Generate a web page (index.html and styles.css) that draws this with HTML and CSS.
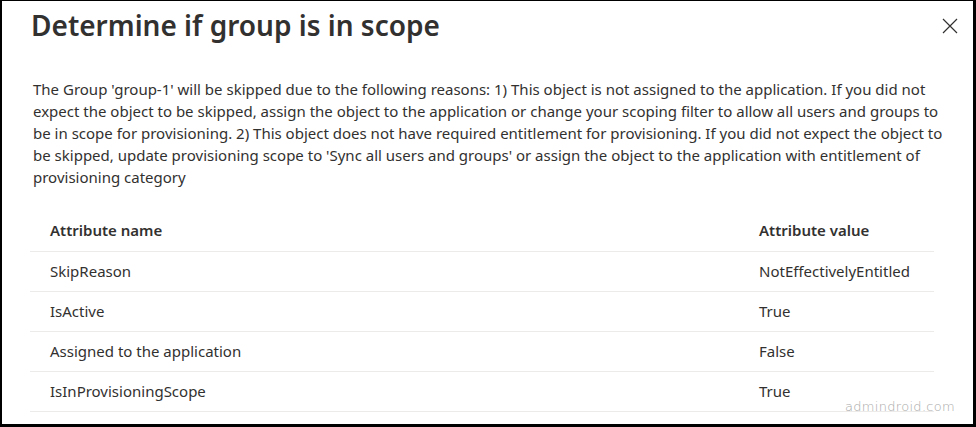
FILE: index.html
```html
<!DOCTYPE html>
<html>
<head>
<meta charset="utf-8">
<link rel="stylesheet" href="styles.css">
</head>
<body>
<div class="frame">
  <div class="header">
    <h1 class="title">Determine if group is in scope</h1>
    <button class="close" aria-label="Close">
      <svg width="16" height="16" viewBox="0 0 16 16"><path d="M1 1 L15 15 M15 1 L1 15" stroke="#323130" stroke-width="1.2" fill="none"/></svg>
    </button>
  </div>
  <p class="desc">The Group 'group-1' will be skipped due to the following reasons: 1) This object is not assigned to the application. If you did not expect the object to be skipped, assign the object to the application or change your scoping filter to allow all users and groups to be in scope for provisioning. 2) This object does not have required entitlement for provisioning. If you did not expect the object to be skipped, update provisioning scope to 'Sync all users and groups' or assign the object to the application with entitlement of provisioning category</p>
  <table class="attrs">
    <thead>
      <tr><th class="c1">Attribute name</th><th class="c2">Attribute value</th></tr>
    </thead>
    <tbody>
      <tr><td class="c1">SkipReason</td><td class="c2">NotEffectivelyEntitled</td></tr>
      <tr><td class="c1">IsActive</td><td class="c2">True</td></tr>
      <tr><td class="c1">Assigned to the application</td><td class="c2">False</td></tr>
      <tr><td class="c1">IsInProvisioningScope</td><td class="c2">True</td></tr>
    </tbody>
  </table>
  <div class="watermark">admindroid.com</div>
</div>
</body>
</html>
```
FILE: styles.css
```css
* { box-sizing: border-box; }
html, body { margin: 0; padding: 0; background: #fff; }
body { font-family: "Noto Sans", "Open Sans", sans-serif; color: #323130; }
.frame {
  position: relative;
  width: 976px;
  height: 427px;
  border-style: solid;
  border-color: #000;
  border-width: 1px 3px 3px 2px;
  overflow: hidden;
}
.header {
  display: flex;
  align-items: center;
  justify-content: space-between;
  padding: 4px 15px 0 29px;
  height: 44px;
}
.title {
  margin: 0;
  font-size: 28px;
  font-weight: 600;
  line-height: 38px;
}
.close {
  border: 0;
  background: none;
  padding: 0;
  width: 16px;
  height: 16px;
  display: flex;
  margin-top: 2px;
}
.desc {
  margin: 33px 17px 0 31px;
  font-size: 15px;
  line-height: 22px;
}
.attrs {
  margin: 22px 0 0 28px;
  width: 904px;
  border-collapse: collapse;
  font-size: 15px;
}
.attrs th, .attrs td {
  text-align: left;
  padding: 0 20px;
  height: 40px;
  border-bottom: 1px solid #edebe9;
  vertical-align: middle;
}
.attrs th { font-weight: 600; height: 41px; }
.attrs .c1 { width: 709px; }
.watermark {
  position: absolute;
  right: 18px;
  bottom: 10px;
  font-family: "DejaVu Sans", sans-serif;
  font-weight: 300;
  font-size: 13px;
  color: #a8a8a8;
  letter-spacing: 0.3px;
}
```
